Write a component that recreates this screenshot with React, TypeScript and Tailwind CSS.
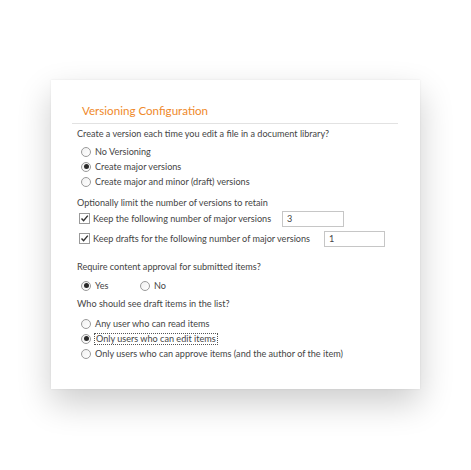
import React from 'react';

const font = { fontFamily: 'Lato, "Noto Sans", "Liberation Sans", sans-serif' };

const Radio = ({ checked }: { checked?: boolean }) => (
  <span className="w-[10px] h-[10px] rounded-full border border-[#9a9a9a] bg-gradient-to-br from-[#f0f0f0] to-white flex items-center justify-center shrink-0">
    {checked && <span className="w-[5px] h-[5px] rounded-full bg-[#2a2a2a]" />}
  </span>
);

const Check = () => (
  <span className="w-[11px] h-[11px] border border-[#9a9a9a] bg-white flex items-center justify-center shrink-0">
    <svg width="9" height="9" viewBox="0 0 9 9">
      <path d="M1.5 4.5 L3.6 6.8 L7.8 1.6" fill="none" stroke="#333" strokeWidth="1.4" />
    </svg>
  </span>
);

const RadioRow = ({ label, checked, focus }: { label: string; checked?: boolean; focus?: boolean }) => (
  <div className="h-[15px] flex items-center pl-[4px] gap-[4px]">
    <Radio checked={checked} />
    <span className={focus ? 'outline-1 outline-dotted outline-[#555] leading-[10px] px-px' : ''}>{label}</span>
  </div>
);

export default function App() {
  return (
    <div className="w-[471px] h-[470px] bg-white pt-[80px] pl-[51px] whitespace-nowrap" style={font}>
      <div className="w-[369px] h-[309px] bg-white shadow-[0_14px_32px_rgba(0,0,0,0.2),0_0_2px_rgba(0,0,0,0.08)] pt-[22px] px-[21px] text-[9.1px] text-[#454545]">
        <div className="h-[17px] flex items-center pl-[10px] text-[11.6px] text-[#ef8a2c]">Versioning Configuration</div>
        <div className="mt-[4px] h-px bg-[#e2e2e2] mr-px" />
        <div className="pl-[5px]">
          <div className="mt-[2px] h-[15px] flex items-center">Create a version each time you edit a file in a document library?</div>
          <div className="mt-[3px]">
            <RadioRow label="No Versioning" />
            <RadioRow label="Create major versions" checked />
            <RadioRow label="Create major and minor (draft) versions" />
          </div>
          <div className="mt-[6px] h-[15px] flex items-center">Optionally limit the number of versions to retain</div>
          <div className="h-[17px] flex items-center pl-[2px]">
            <Check />
            <span className="w-[192px] pl-[3px]">Keep the following number of major versions</span>
            <span className="w-[62px] h-[16px] border border-[#c6c6c6] pl-[4px] flex items-center">3</span>
          </div>
          <div className="mt-[3px] h-[17px] flex items-center pl-[2px]">
            <Check />
            <span className="w-[234px] pl-[3px]">Keep drafts for the following number of major versions</span>
            <span className="w-[61px] h-[16px] border border-[#c6c6c6] pl-[4px] flex items-center">1</span>
          </div>
          <div className="mt-[12px] h-[15px] flex items-center">Require content approval for submitted items?</div>
          <div className="mt-[4px] h-[15px] flex items-center pl-[4px]">
            <Radio checked />
            <span className="ml-[4px] w-[45px]">Yes</span>
            <Radio />
            <span className="ml-[4px]">No</span>
          </div>
          <div className="mt-[3px] h-[15px] flex items-center">Who should see draft items in the list?</div>
          <div className="mt-[5px]">
            <RadioRow label="Any user who can read items" />
            <RadioRow label="Only users who can edit items" checked focus />
            <RadioRow label="Only users who can approve items (and the author of the item)" />
          </div>
        </div>
      </div>
    </div>
  );
}
